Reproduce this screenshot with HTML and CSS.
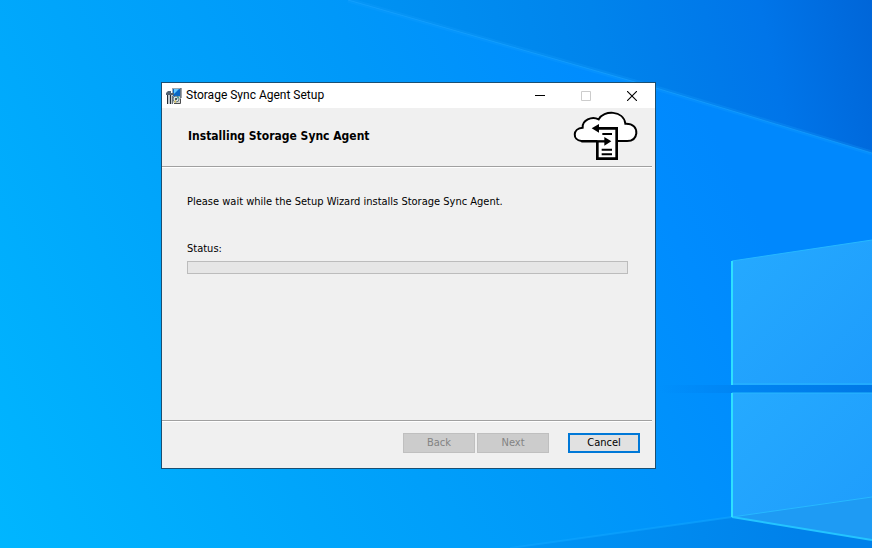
FILE: index.html
```html
<!DOCTYPE html>
<html lang="en">
<head>
<meta charset="utf-8">
<title>Storage Sync Agent Setup</title>
<link rel="stylesheet" href="styles.css">
</head>
<body>
<div class="desktop">
  <svg class="wallpaper" viewBox="0 0 872 548" preserveAspectRatio="none" aria-hidden="true">
    <defs>
      <linearGradient id="sky" gradientUnits="userSpaceOnUse" x1="0" y1="548" x2="740" y2="180">
        <stop offset="0" stop-color="#00b6ff"/>
        <stop offset=".35" stop-color="#00a5fb"/>
        <stop offset=".65" stop-color="#0098f9"/>
        <stop offset=".9" stop-color="#008cfe"/>
        <stop offset="1" stop-color="#0088fd"/>
      </linearGradient>
      <linearGradient id="shade" gradientUnits="userSpaceOnUse" x1="360" y1="120" x2="900" y2="0">
        <stop offset="0" stop-color="#0094f4"/>
        <stop offset=".45" stop-color="#0084ec"/>
        <stop offset=".75" stop-color="#0075e9"/>
        <stop offset="1" stop-color="#0062d4"/>
      </linearGradient>
      <linearGradient id="floor" gradientUnits="userSpaceOnUse" x1="510" y1="540" x2="800" y2="548">
        <stop offset="0" stop-color="#0096f6"/>
        <stop offset="1" stop-color="#0081ea"/>
      </linearGradient>
      <linearGradient id="pane" x1="0" y1="0" x2="1" y2="1">
        <stop offset="0" stop-color="#25aaff"/>
        <stop offset="1" stop-color="#1e9cfc"/>
      </linearGradient>
      <linearGradient id="gap" x1="0" x2="1" y1="0" y2="0">
        <stop offset="0" stop-color="#0084f2" stop-opacity="0"/>
        <stop offset=".4" stop-color="#0084f2"/>
        <stop offset="1" stop-color="#0078e6"/>
      </linearGradient>
    </defs>
    <rect width="872" height="548" fill="url(#sky)"/>
    <path d="M348 0 600 72 656 88 872 153V0Z" fill="url(#shade)"/>
    <path d="M348 0 600 72 656 88 872 153" fill="none" stroke="#12a0ff" stroke-opacity=".25" stroke-width="5"/>
    <path d="M348 0 600 72 656 88 872 153" fill="none" stroke="#1ba3ff" stroke-opacity=".6"/>
    <path d="M510 548 732 517 872 540V548Z" fill="url(#floor)"/>
    <path d="M510 548 732 517" stroke="#0fa5ff" stroke-opacity=".6" stroke-width="2"/>
    <path d="M660 385H872V393H660Z" fill="url(#gap)"/>
    <path d="M732 261 872 240V385H732Z" fill="url(#pane)"/>
    <path d="M732 393H872V540L732 517Z" fill="url(#pane)"/>
    <path d="M732 517 872 497V540Z" fill="#1e9bf4"/>
    <path d="M732 517 872 497M732 261 872 240M732 393H872M732 384H872" fill="none" stroke="#27b8ff"/>
    <path d="M732 517 872 540" stroke="#24c4ff" stroke-width="2"/>
    <path d="M732 261V385M732 393V517" stroke="#2ee0ff" stroke-width="2"/>
  </svg>

  <main class="window">
    <header class="titlebar">
      <svg class="app-icon" viewBox="0 0 16 16" aria-hidden="true">
        <path d="M6 0H15V9H6Z" fill="#9aa8b4"/>
        <path d="M7 1H14V8H7Z" fill="#0866c6"/>
        <path d="M8 1H13L8 6Z" fill="#62c8ff"/>
        <path d="M15 0V10H10" fill="none" stroke="#3c4650"/>
        <path d="M9 9H14V15H7V12Z" fill="#d8d9d0"/>
        <path d="M0 5 2 3H5V5H8V7H0Z" fill="#536170"/>
        <path d="M1 7H7V16H1Z" fill="#c3c9cd"/>
        <path d="M1.500 7V16M4.500 7V16" stroke="#252d36"/>
        <path d="M6.500 8V16" stroke="#69747e"/>
        <circle cx="10" cy="11" r="3" fill="#d8e4e7" stroke="#627580"/>
        <path d="M10 11 12 8 13 10Z" fill="#4ca995"/>
        <path d="M10 11 8 14 10 15Z" fill="#dac568"/>
        <circle cx="10" cy="11" r="1" fill="#23303a"/>
        <path d="M8 15.500H14.500V11" fill="none" stroke="#4a4c4e"/>
      </svg>
      <h1 class="title">Storage Sync Agent Setup</h1>
      <button class="caption" type="button" aria-label="Minimize"><svg viewBox="0 0 10 10"><path d="M0 4.5H10" stroke="#000"/></svg></button>
      <button class="caption" type="button" aria-label="Maximize" disabled><svg viewBox="0 0 10 10"><path d="M.5 .5H9.5V9.5H.5Z" fill="none" stroke="#ccc"/></svg></button>
      <button class="caption" type="button" aria-label="Close"><svg viewBox="0 0 10 10"><path d="M0 0 10 10M10 0 0 10" stroke="#000" stroke-width="1.1"/></svg></button>
    </header>

    <section class="banner">
      <h2 class="heading">Installing Storage Sync Agent</h2>
      <svg class="logo" viewBox="159 99 195 150" aria-hidden="true">
        <path d="M232 189H184C157 186 157 151 188 149C186 127 215 113 236 124C250 96 311 96 316 137C340 136 350 150 349 166C347 182 335 190 318 189Z" fill="#fff" stroke="#000" stroke-width="6"/>
        <path d="M232 151H290V242H232Z" fill="#fff"/>
        <path d="M228 151H290V242H232V190" fill="none" stroke="#000" stroke-width="8"/>
        <path d="M184 190H258" stroke="#000" stroke-width="7"/>
        <path d="M215 151 237 138V164ZM274 190 253 177V203Z"/>
        <path d="M247 168H276M245 215H276M245 229H276" stroke="#000" stroke-width="6"/>
      </svg>
    </section>

    <section class="content">
      <p class="message">Please wait while the Setup Wizard installs Storage Sync Agent.</p>
      <label class="status" for="progress">Status:</label>
      <progress class="progress" id="progress" value="0" max="100"></progress>
    </section>

    <footer class="actions">
      <button class="button" type="button" disabled>Back</button>
      <button class="button" type="button" disabled>Next</button>
      <button class="button button-default" type="button">Cancel</button>
    </footer>
  </main>
</div>
</body>
</html>
```
FILE: styles.css
```css
* {
  box-sizing: border-box;
}

body {
  margin: 0;
  font: 11px/16px "DejaVu Sans Condensed", "DejaVu Sans", sans-serif;
  color: #000;
}

.desktop {
  position: relative;
  display: flex;
  min-height: 100vh;
  padding: 82px 216px 79px 161px;
  background: #0098fa;
}

.wallpaper {
  position: absolute;
  inset: 0;
  width: 100%;
  height: 100%;
}

.window {
  position: relative;
  display: flex;
  flex: 1;
  flex-direction: column;
  border: 1px solid #1b4f72;
  background: #f0f0f0;
}

.titlebar {
  display: flex;
  align-items: center;
  height: 25px;
  padding-left: 4px;
  background: #fff;
}

.app-icon {
  width: 16px;
  height: 16px;
}

.title {
  flex: 1;
  margin: 0 0 0 4px;
  padding-bottom: 2px;
  font: 12px/16px Roboto, "Open Sans", sans-serif;
}

.caption {
  display: flex;
  align-items: center;
  justify-content: center;
  width: 46px;
  height: 25px;
  padding: 0;
  border: 0;
  background: none;
}

.caption svg {
  width: 10px;
  height: 10px;
}

.banner,
.content {
  border-bottom: 1px solid #a0a0a0;
  box-shadow: 0 1px #fff;
  margin-right: 3px;
}

.banner {
  display: flex;
  justify-content: space-between;
  height: 59px;
  padding: 3px 14px 0 26px;
}

.heading {
  margin: 17px 0 0;
  font-size: 12px;
  line-height: 16px;
}

.logo {
  width: 65px;
  height: 50px;
}

.content {
  flex: 1;
  padding: 27px 24px 0 25px;
}

.message {
  margin: 0 0 31px;
}

.status {
  display: block;
  margin-bottom: 4px;
}

.progress {
  display: block;
  width: 100%;
  height: 13px;
  border: 1px solid #bcbcbc;
  background: #e6e6e6;
  appearance: none;
}

.progress::-webkit-progress-bar {
  background: #e6e6e6;
}

.progress::-webkit-progress-value {
  background: #06b025;
}

.actions {
  display: flex;
  justify-content: flex-end;
  gap: 2px;
  padding: 12px 15px 15px;
}

.button {
  width: 72px;
  height: 20px;
  padding: 0;
  border: 1px solid #bfbfbf;
  background: #ccc;
  color: #838383;
  font: inherit;
}

.button-default {
  margin-left: 17px;
  border: 2px solid #0078d7;
  background: #e1e1e1;
  color: #000;
}
```
